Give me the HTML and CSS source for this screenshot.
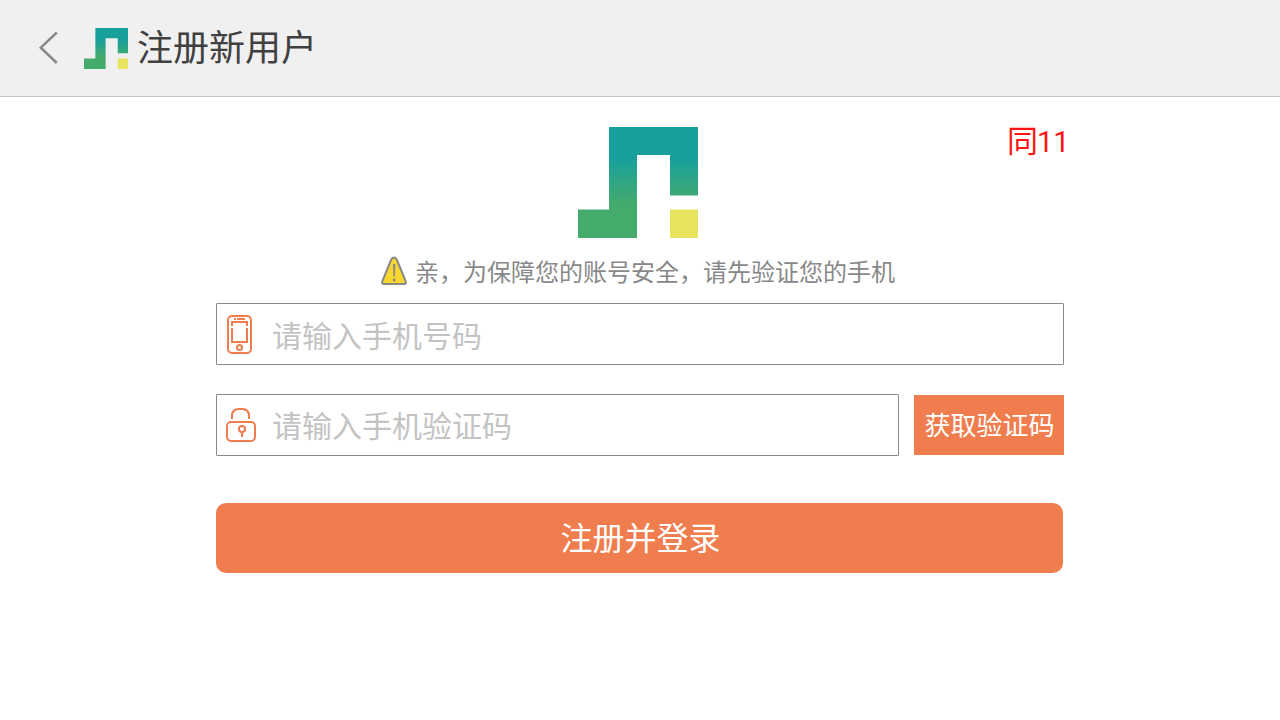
FILE: index.html
```
<!DOCTYPE html>
<html lang="zh-CN">
<head>
<meta charset="utf-8">
<title>注册新用户</title>
<link rel="stylesheet" href="styles.css">
</head>
<body>
<header class="topbar">
  <svg class="back" width="20" height="34" viewBox="0 0 20 34"><path d="M18.800 1.500 2.800 16.700 18.800 32" fill="none" stroke="#888" stroke-width="2.500"/></svg>
  <svg class="logo-small" width="44" height="41" viewBox="0 0 120 111" preserveAspectRatio="none">
    <defs><linearGradient id="brand" x1="0" y1="0" x2="0" y2="111" gradientUnits="userSpaceOnUse"><stop offset=".3" stop-color="#1aa09c"/><stop offset=".7" stop-color="#45ab6c"/></linearGradient></defs>
    <path fill="url(#brand)" d="M31 0H120V68.500H92V28H59V111H0V82.500H31Z"/>
    <path fill="#e9e45f" d="M92 82.500h28V111H92Z"/>
  </svg>
  <h1 class="title">注册新用户</h1>
</header>
<main class="page">
  <div class="brand-row">
    <svg class="logo" width="120" height="111" viewBox="0 0 120 111">
      <path fill="url(#brand)" d="M31 0H120V68.500H92V28H59V111H0V82.500H31Z"/>
      <path fill="#e9e45f" d="M92 82.500h28V111H92Z"/>
    </svg>
    <span class="mark">同<span class="digits">11</span></span>
  </div>
  <p class="hint">
    <svg class="warning" width="28" height="30" viewBox="0 0 28 30"><path d="M11.200 3.500Q14 -.5 16.800 3.500L25.800 25.500Q26.500 28 24.200 28H3.800Q1.500 28 2.200 25.500Z" fill="#f8d830" stroke="#888" stroke-width="2"/><path d="M13 8h2.400l-.5 12.500h-1.400Z" fill="#888"/><circle cx="14.200" cy="24" r="1.400" fill="#888"/></svg>
    <span>亲，为保障您的账号安全，请先验证您的手机</span>
  </p>
  <label class="field">
    <svg class="icon" width="32" height="40" viewBox="0 0 32 40" fill="none" stroke="#f07d4d" stroke-width="2"><rect x="3" y="2" width="23" height="37" rx="4"/><path d="M9 5h2M12 5h8"/><path d="M7 12V8H22V12M7 14V28H22V14"/><circle cx="14.500" cy="33.500" r="2.600"/></svg>
    <input class="input" type="tel" placeholder="请输入手机号码">
  </label>
  <div class="code-row">
    <label class="field">
      <svg class="icon" width="32" height="36" viewBox="0 0 32 36" fill="none" stroke="#f07d4d" stroke-width="2"><rect x="2" y="15" width="28" height="19" rx="4"/><path d="M7 12V9Q7 2 14 2H17Q24 2 24 9V12"/><circle cx="17" cy="22" r="3.100"/><path d="M17 25V30"/></svg>
      <input class="input" type="text" placeholder="请输入手机验证码">
    </label>
    <button class="code-btn">获取验证码</button>
  </div>
  <button class="submit">注册并登录</button>
</main>
</body>
</html>
```
FILE: styles.css
```
* { box-sizing: border-box; }
body {
  margin: 0;
  background: #fff;
  font-family: "Noto Sans CJK SC", sans-serif;
  font-weight: 400;
}
button, input { font: inherit; border: 0; border-radius: 0; margin: 0; padding: 0; }
.topbar {
  height: 97px;
  display: flex;
  align-items: center;
  padding-left: 38px;
  background: #f0f0f0;
  border-bottom: 1px solid #c3c3c3;
}
.back { margin-right: 26px; }
.logo-small { margin-top: 1px; }
.title {
  margin: 0 0 6px 9px;
  font-size: 36px;
  font-weight: 400;
  line-height: 48px;
  color: #404040;
}
.page { width: 848px; margin: 0 auto; padding-top: 30px; }
.brand-row {
  display: grid;
  grid-template-columns: 362px 120px 1fr;
  height: 111px;
}
.logo { grid-column: 2; }
.mark {
  margin-left: 309px;
  margin-right: -12px;
  margin-top: -4px;
  font-size: 31px;
  line-height: 32px;
  color: #ff1414;
  white-space: nowrap;
}
.digits { margin-left: -1px; font-family: Roboto, sans-serif; font-size: 29px; font-weight: 400; }
.hint {
  display: flex;
  align-items: center;
  gap: 7px;
  height: 36px;
  margin: 15px 0 14px 164px;
  font-size: 24px;
  line-height: 36px;
  color: #888;
}
.field {
  display: flex;
  align-items: center;
  height: 62px;
  padding-left: 8px;
  border: 1px solid #888;
  border-radius: 1px;
  background: #fff;
}
.icon { flex: none; }
.input {
  flex: 1;
  min-width: 0;
  height: 56px;
  margin-left: 15px;
  padding-bottom: 1px;
  font-size: 30px;
  background: none;
  outline: none;
}
.input::placeholder { color: #c3c3c3; opacity: 1; }
.code-row {
  display: flex;
  align-items: center;
  gap: 15px;
  margin-top: 29px;
}
.code-row .field { flex: 1; }
.code-row .input { padding-bottom: 2px; }
.code-btn {
  width: 150px;
  height: 60px;
  padding: 0 0 4px 1px;
  font-size: 26px;
  color: #fff;
  background: #f07d4d;
}
.submit {
  display: block;
  width: 847px;
  height: 70px;
  margin-top: 47px;
  padding: 0 0 4px 2px;
  font-size: 32px;
  color: #fff;
  background: #f07d4d;
  border-radius: 10px;
}
```
